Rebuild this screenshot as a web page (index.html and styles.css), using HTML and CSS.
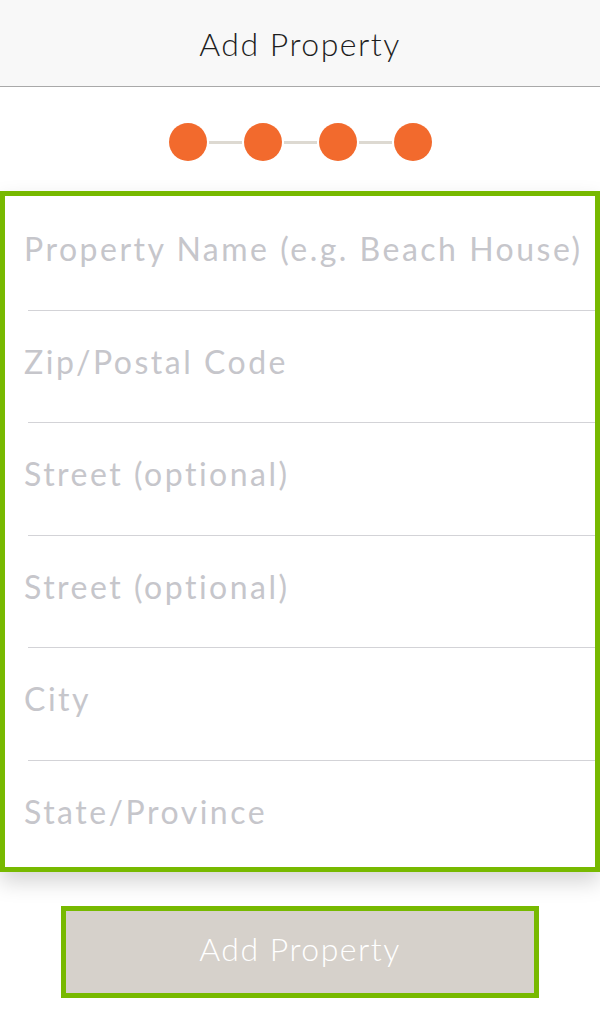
FILE: index.html
```html
<!DOCTYPE html>
<html lang="en">
<head>
<meta charset="utf-8">
<title>Add Property</title>
<link rel="stylesheet" href="styles.css">
</head>
<body>
  <header class="topbar">
    <h1 class="topbar-title">Add Property</h1>
  </header>

  <div class="steps">
    <span class="step-dot"></span>
    <span class="step-line"></span>
    <span class="step-dot"></span>
    <span class="step-line"></span>
    <span class="step-dot"></span>
    <span class="step-line"></span>
    <span class="step-dot"></span>
  </div>

  <form class="form-card">
    <div class="field"><span class="placeholder">Property Name (e.g. Beach House)</span></div>
    <div class="field"><span class="placeholder">Zip/Postal Code</span></div>
    <div class="field"><span class="placeholder">Street (optional)</span></div>
    <div class="field"><span class="placeholder">Street (optional)</span></div>
    <div class="field"><span class="placeholder">City</span></div>
    <div class="field field-last"><span class="placeholder">State/Province</span></div>
  </form>

  <div class="actions">
    <button class="submit-btn" type="button">Add Property</button>
  </div>
</body>
</html>
```

FILE: styles.css
```css
* {
  box-sizing: border-box;
}

html, body {
  margin: 0;
  padding: 0;
  background: #ffffff;
}

body {
  width: 600px;
  font-family: "Lato", "Open Sans", "Liberation Sans", sans-serif;
}

.topbar {
  height: 87px;
  background: #f8f8f8;
  border-bottom: 1px solid #a9a9a9;
  display: flex;
  align-items: center;
  justify-content: center;
}

.topbar-title {
  margin: 0;
  padding-top: 2px;
  font-size: 32px;
  font-weight: 300;
  line-height: 40px;
  color: #1e1e1e;
  letter-spacing: 1.5px;
}

.steps {
  display: flex;
  align-items: center;
  justify-content: center;
  padding: 36px 0 30px;
}

.step-dot {
  width: 38px;
  height: 38px;
  border-radius: 50%;
  background: #f26a2d;
  flex: none;
}

.step-line {
  width: 33px;
  height: 3px;
  margin: 0 2px;
  background: #ddd9d1;
  flex: none;
}

.form-card {
  margin: 0;
  height: 681px;
  border: 5px solid #77b900;
  background: #ffffff;
  padding-top: 2px;
  overflow: hidden;
  box-shadow: 0 10px 20px rgba(0, 0, 0, 0.17);
}

.field {
  height: 112.5px;
  margin-left: 23px;
  border-bottom: 1px solid #d3d3d7;
  padding-top: 31px;
  padding-right: 6px;
}

.field-last {
  border-bottom: none;
}

.placeholder {
  display: block;
  margin-left: -4px;
  font-size: 32px;
  line-height: 40px;
  color: #c6c6cb;
  letter-spacing: 2.5px;
  white-space: nowrap;
  overflow: hidden;
  text-overflow: ellipsis;
}

.actions {
  display: flex;
  justify-content: center;
  padding-top: 34px;
}

.submit-btn {
  width: 478px;
  height: 92px;
  border: 5px solid #77b900;
  background: #d6d1cb;
  color: #ffffff;
  font-family: "Lato", "Open Sans", "Liberation Sans", sans-serif;
  font-size: 32px;
  font-weight: 300;
  letter-spacing: 1.5px;
  padding: 0 0 7px;
  cursor: pointer;
}
```
